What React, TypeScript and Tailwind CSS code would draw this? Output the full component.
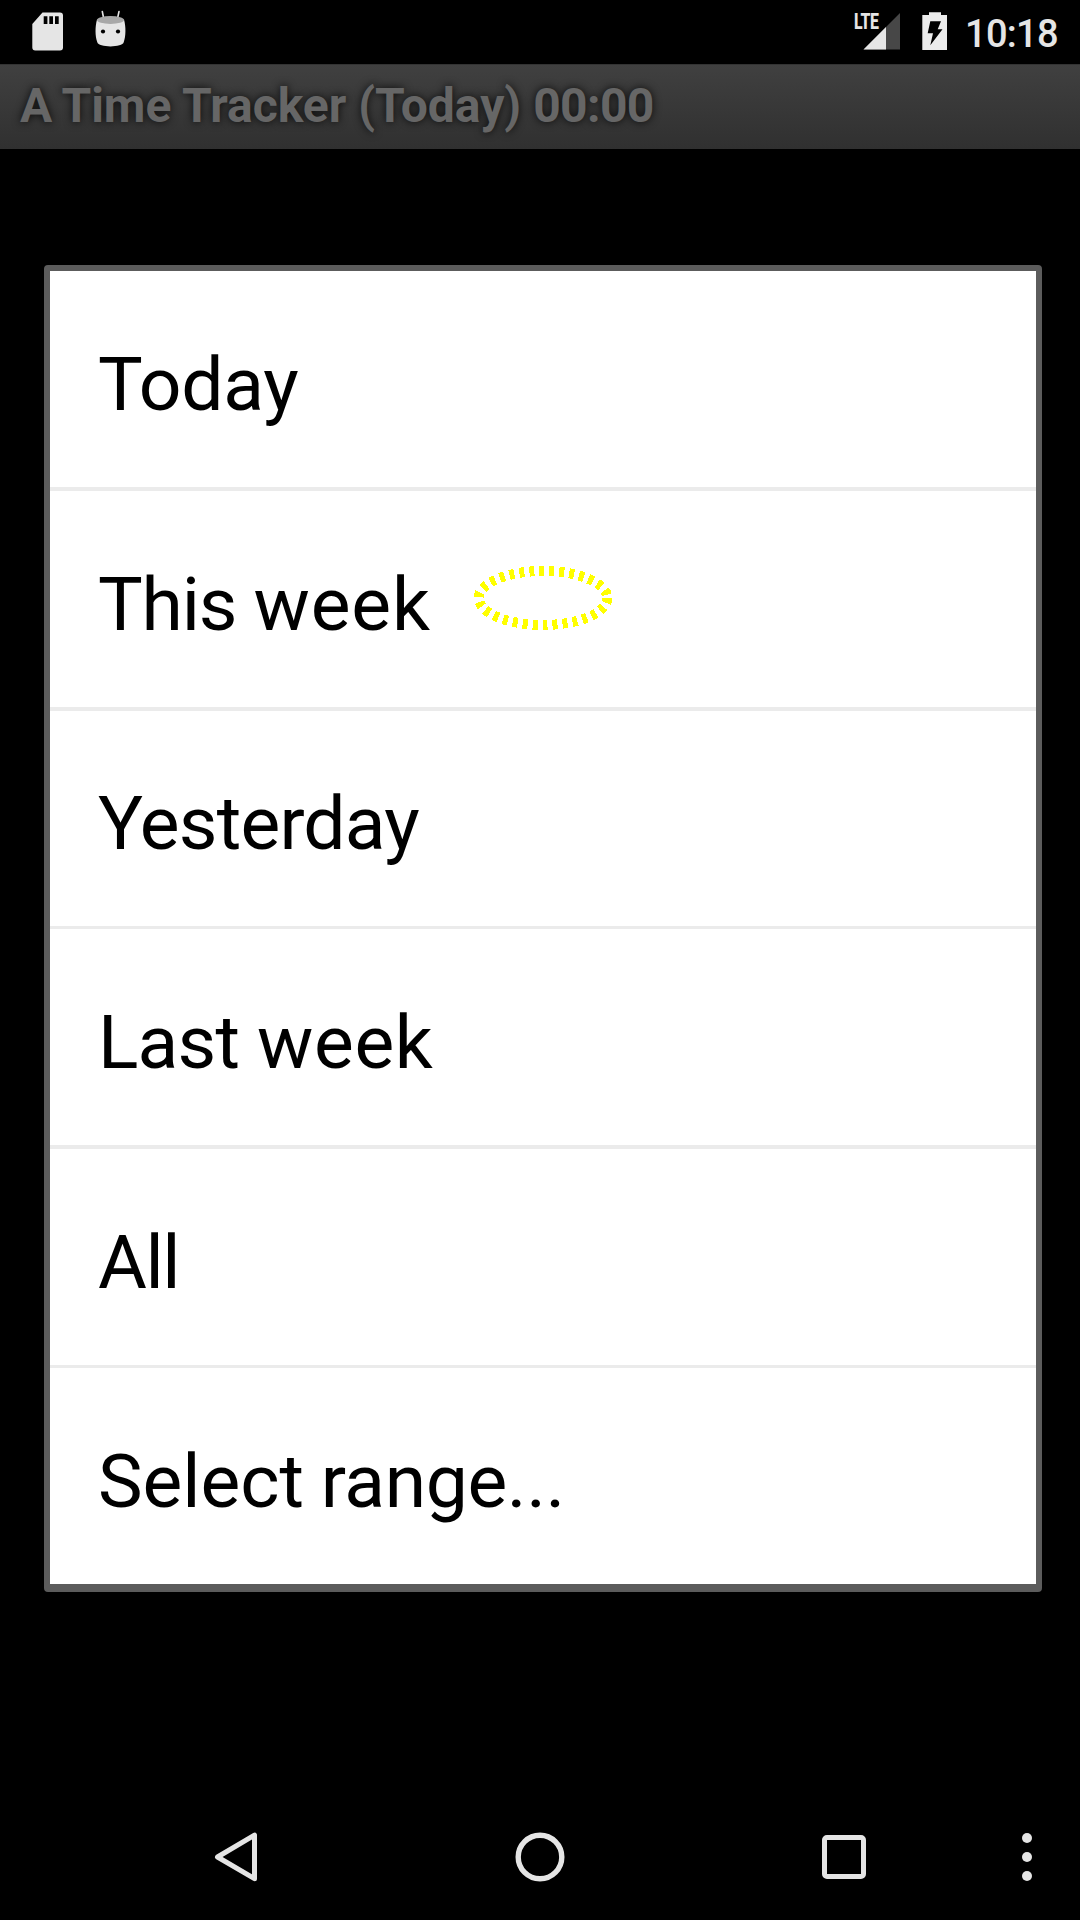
type Word = { text: string; spacing: string };
type Row = { words: Word[]; box: string; marked?: boolean };

const rows: Row[] = [
  { words: [{ text: 'Today', spacing: 'tracking-[-0.3px]' }], box: 'h-[220px] border-b-4 pt-[10px]' },
  {
    words: [
      { text: 'This ', spacing: 'tracking-[-1.2px]' },
      { text: 'week', spacing: 'tracking-[0.8px]' },
    ],
    box: 'h-[220px] border-b-4 pt-[10px]',
    marked: true,
  },
  { words: [{ text: 'Yesterday', spacing: 'tracking-[-0.8px]' }], box: 'h-[218px] border-b-3 pt-[9px]' },
  {
    words: [
      { text: 'Last ', spacing: 'tracking-[-0.8px]' },
      { text: 'week', spacing: 'tracking-[0.6px]' },
    ],
    box: 'h-[220px] border-b-4 pt-[10px]',
  },
  { words: [{ text: 'All', spacing: 'tracking-[-1.5px]' }], box: 'h-[219px] border-b-3 pt-[9px]' },
  {
    words: [
      { text: 'Select', spacing: 'tracking-normal' },
      { text: ' ', spacing: 'tracking-[-2px]' },
      { text: 'range...', spacing: 'tracking-[-0.4px]' },
    ],
    box: 'h-[216px] pt-[10px]',
  },
];

function SdCardIcon() {
  return (
    <svg className="ml-8 mt-3 h-10 w-8 shrink-0" viewBox="0 0 32 40">
      <path
        d="M10.500 .5H28a3 3 0 0 1 3 3V35.500a3 3 0 0 1-3 3H3.300a3 3 0 0 1-3-3V12z"
        fill="#e5e5e5"
      />
      <path d="M11.700 4.300h3.700v7.700h-3.700zM17.300 4.300h3.700v7.700h-3.700zM23 4.300h3.700v7.700H23z" fill="#000" />
    </svg>
  );
}

function DroidIcon() {
  return (
    <svg className="ml-[31px] mt-[10px] h-[38px] w-8 shrink-0" viewBox="0 0 32 38">
      <path d="M7.300 1.500L8.700 8.500M24 1.500L22.500 8.500" stroke="#e5e5e5" strokeWidth="1.600" strokeLinecap="round" />
      <path d="M2 9.500C0 17 0 26 2.300 32.300C3.300 37.800 27.700 37.800 28.700 32.300C31 26 31 17 29 9.500z" fill="#e5e5e5" />
      <ellipse cx="15.500" cy="10" rx="13.500" ry="3.900" fill="#a8a8a8" />
      <circle cx="8" cy="21.500" r="2.100" fill="#000" />
      <circle cx="23" cy="21.500" r="2.100" fill="#000" />
    </svg>
  );
}

function StatusBar() {
  return (
    <div className="flex h-16 items-start bg-black">
      <SdCardIcon />
      <DroidIcon />
      <div className="flex-1" />
      <div className="relative mt-3 h-[38px] w-12">
        <svg className="h-[38px] w-12" viewBox="0 0 48 38">
          <path d="M45 1V37.500H8.500z" fill="#474747" />
          <path d="M31 15V37.500H8.500z" fill="#e5e5e5" />
        </svg>
        <span className="absolute left-[-1px] top-0 origin-left scale-x-[0.72] text-[22px] font-extrabold leading-[20px] tracking-[-0.5px] text-[#e5e5e5]">
          LTE
        </span>
      </div>
      <svg className="ml-[19px] mt-3 h-[38px] w-[26px]" viewBox="0 0 26 38">
        <path d="M7 .3H19V3H25V38H.3V3H7z" fill="#ececec" />
        <path d="M8.300 9.300H19L15.700 17.300H20.500L8.300 33.300L11 21.300H5.700z" fill="#000" />
      </svg>
      <span className="ml-[17px] mt-[12px] w-[115px] whitespace-nowrap text-[38px] font-medium leading-[44px] tracking-[-0.7px] text-[#e5e5e5]">
        10:18
      </span>
    </div>
  );
}

function TouchRing() {
  return (
    <svg className="absolute left-[417px] top-[69px] h-[76px] w-[152px]" viewBox="0 0 152 76" shapeRendering="crispEdges">
      <ellipse cx="76" cy="38" rx="64.300" ry="27" fill="none" stroke="#ffff00" strokeWidth="10" strokeDasharray="5 5" />
    </svg>
  );
}

function NavBar() {
  return (
    <div className="flex h-[126px] items-center bg-black">
      <svg className="ml-[212px] h-[54px] w-[48px]" viewBox="0 0 48 54">
        <path d="M42.500 5.100V48.700L5.500 27z" fill="none" stroke="#e5e5e5" strokeWidth="5" strokeLinejoin="round" />
      </svg>
      <svg className="ml-[253px] h-[54px] w-[54px]" viewBox="0 0 54 54">
        <circle cx="27" cy="27" r="21.800" fill="none" stroke="#e5e5e5" strokeWidth="5.400" />
      </svg>
      <div className="ml-[255px] h-11 w-11 rounded-[5px] border-[5px] border-[#e5e5e5]" />
      <div className="ml-[156px] flex flex-col gap-[9px]">
        <span className="h-[10px] w-[10px] rounded-full bg-[#e5e5e5]" />
        <span className="h-[10px] w-[10px] rounded-full bg-[#e5e5e5]" />
        <span className="h-[10px] w-[10px] rounded-full bg-[#e5e5e5]" />
      </div>
    </div>
  );
}

export default function App() {
  return (
    <div className="flex h-[1920px] w-[1080px] flex-col overflow-hidden bg-black font-['Roboto',sans-serif]">
      <StatusBar />
      <header className="flex h-[85px] items-center border-t border-[#333333] bg-linear-to-b from-[#404040] to-[#303030] pb-[2px] pl-5">
        <h1 className="whitespace-nowrap text-[48px] font-bold leading-[56px] text-[#666666] [text-shadow:0_0_9px_#000000d8]">
          <span className="tracking-[-1.4px]">A </span>
          <span>Time Tracker (Today) </span>
          <span className="tracking-[-0.6px]">00:00</span>
        </h1>
      </header>
      <main className="flex flex-1 flex-col pl-[44px] pt-[116px]">
        <ul className="flex h-[1327px] w-[998px] flex-col rounded-[4px] border-x-[6px] border-b-[8px] border-t-[6px] border-[#5c5c5c] bg-white">
          {rows.map((row, i) => (
            <li key={i} className={`relative flex items-center border-[#ebebeb] pl-12 ${row.box}`}>
              <span className="whitespace-pre text-[75px] leading-[88px] text-black">
                {row.words.map((word) => (
                  <span key={word.text} className={word.spacing}>
                    {word.text}
                  </span>
                ))}
              </span>
              {row.marked && <TouchRing />}
            </li>
          ))}
        </ul>
      </main>
      <NavBar />
    </div>
  );
}
